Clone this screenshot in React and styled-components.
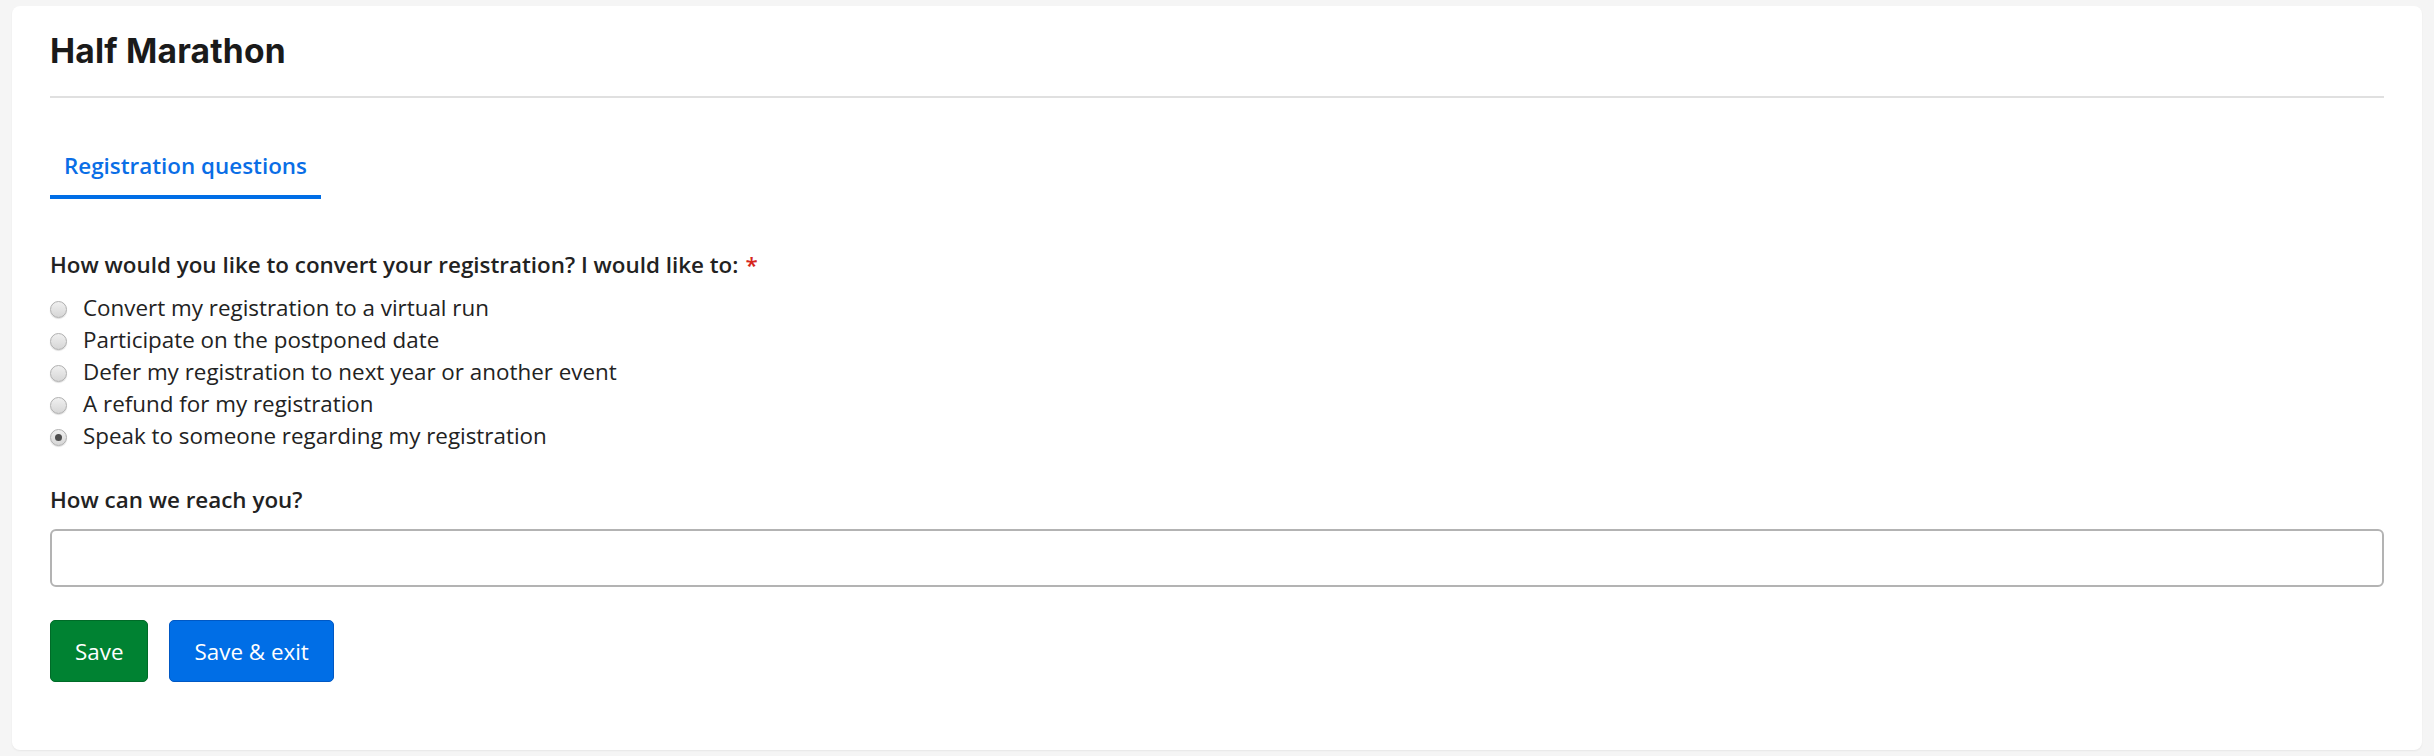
import React from 'react';
import styled, { createGlobalStyle } from 'styled-components';

const GlobalStyle = createGlobalStyle`
  html, body {
    margin: 0;
    padding: 0;
    background: #f5f5f5;
  }
  body {
    font-family: "Open Sans", "Liberation Sans", sans-serif;
    color: #222;
  }
`;

// Layout
const Page = styled.div`
  padding: 6px 12px 4px;
`;

const Card = styled.div`
  background: #fff;
  border-radius: 8px;
  box-shadow: 0 1px 2px rgba(0, 0, 0, 0.06);
  padding: 25px 38px 68px;
`;

const Header = styled.div`
  padding-bottom: 25px;
  border-bottom: 2px solid #e0e0e0;
`;

const Title = styled.h1`
  margin: 0;
  font-family: Inter, "Liberation Sans", sans-serif;
  font-weight: 700;
  font-size: 33.6px;
  line-height: 40px;
  letter-spacing: 0.2px;
  color: #1a1a1a;
`;

const Tabs = styled.div`
  display: flex;
  margin-top: 41px;
`;

const Tab = styled.div`
  padding: 12px 14px 14px;
  font-size: 22.4px;
  line-height: 30px;
  font-weight: 600;
  color: ${(p) => (p.active ? '#0a6ee6' : '#555')};
  border-bottom: 4px solid ${(p) => (p.active ? '#006ee6' : 'transparent')};
`;

const Form = styled.form`
  margin-top: 51px;
  display: flex;
  flex-direction: column;
`;

const Label = styled.div`
  font-size: 22.4px;
  line-height: 30px;
  font-weight: 600;
  color: #222;
  margin-top: ${(p) => p.top || 0}px;
`;

const Required = styled.span`
  color: #d6261c;
  margin-left: 7px;
`;

const Options = styled.div`
  display: flex;
  flex-direction: column;
  margin-top: 12px;
`;

const Option = styled.label`
  display: flex;
  align-items: center;
  gap: 16px;
  height: 32px;
  font-size: 22.4px;
  line-height: 30px;
  color: #222;
`;

const Radio = styled.span`
  position: relative;
  width: 15px;
  height: 15px;
  margin-top: 2px;
  border-radius: 50%;
  border: 1px solid #afafaf;
  background: linear-gradient(#f0f0f0, #d6d6d6);
  box-shadow: 0 1px 1px rgba(0, 0, 0, 0.14);
  flex-shrink: 0;

  &::after {
    content: '';
    display: ${(p) => (p.checked ? 'block' : 'none')};
    position: absolute;
    left: 50%;
    top: 50%;
    width: 7px;
    height: 7px;
    margin: -3.5px 0 0 -3.5px;
    border-radius: 50%;
    background: #4d4d4d;
  }
`;

const Input = styled.input`
  margin-top: 14px;
  height: 58px;
  box-sizing: border-box;
  border: 2px solid #b3b3b3;
  border-radius: 6px;
  font-family: inherit;
  font-size: 22px;
  padding: 0 14px;
  outline: none;
`;

const Actions = styled.div`
  display: flex;
  gap: 21px;
  margin-top: 33px;
`;

const Button = styled.button`
  height: 62px;
  padding: 0 24px;
  border-radius: 5px;
  font-family: inherit;
  font-size: 22.4px;
  color: #fff;
  cursor: pointer;
  background: ${(p) => (p.variant === 'green' ? '#008232' : '#006ee6')};
  border: 1px solid ${(p) => (p.variant === 'green' ? '#006b28' : '#0058c4')};
`;

const options = [
  'Convert my registration to a virtual run',
  'Participate on the postponed date',
  'Defer my registration to next year or another event',
  'A refund for my registration',
  'Speak to someone regarding my registration',
];

function App() {
  return (
    <Page>
      <GlobalStyle />
      <Card>
        <Header>
          <Title>Half Marathon</Title>
        </Header>

        <Tabs>
          <Tab active>Registration questions</Tab>
        </Tabs>

        <Form onSubmit={(e) => e.preventDefault()}>
          <Label>
            How would you like to convert your registration? I would like to:
            <Required>*</Required>
          </Label>
          <Options>
            {options.map((o, i) => (
              <Option key={o}>
                <Radio checked={i === 4} />
                {o}
              </Option>
            ))}
          </Options>

          <Label top={33}>How can we reach you?</Label>
          <Input type="text" />

          <Actions>
            <Button variant="green">Save</Button>
            <Button variant="blue">Save &amp; exit</Button>
          </Actions>
        </Form>
      </Card>
    </Page>
  );
}

export default App;
